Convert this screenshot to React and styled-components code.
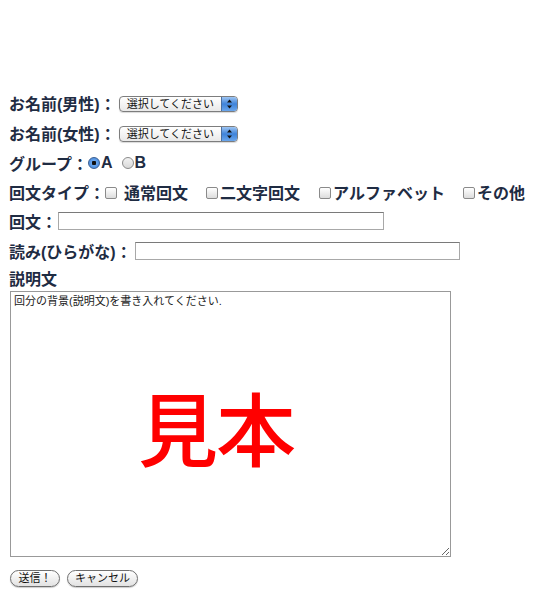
import React from 'react'
import styled, { createGlobalStyle } from 'styled-components'

const GlobalStyle = createGlobalStyle`
  html, body {
    margin: 0;
    padding: 0;
    background: #ffffff;
  }
  body {
    font-family: "Liberation Sans", "Noto Sans CJK JP", sans-serif;
  }
`

const Page = styled.form`
  padding: 88px 0 0 9px;
  width: 539px;
  height: 601px;
  box-sizing: border-box;
  color: #1f2c43;
`

const Row = styled.div`
  display: flex;
  align-items: center;
  height: ${p => p.h || 30}px;
  font-size: 16px;
  font-weight: bold;
  white-space: nowrap;
`

const Label = styled.span`
  margin-right: ${p => p.gap || 0}px;
`

const FakeSelect = styled.div`
  display: flex;
  align-items: center;
  width: 119px;
  height: 16px;
  box-sizing: border-box;
  border: 1px solid #7d7d7d;
  border-radius: 4px;
  background: linear-gradient(#ffffff, #e9e9e9);
  box-shadow: 0 1px 1px rgba(0, 0, 0, 0.15);
  overflow: hidden;
  font-size: 11px;
  font-weight: normal;
  color: #111;
  margin-top: 1px;
`

const SelectText = styled.span`
  flex: 1;
  padding-left: 7px;
  line-height: 14px;
`

const Stepper = styled.span`
  width: 15px;
  height: 100%;
  background: linear-gradient(#9fc6f3, #3f83d9 50%, #6aa6ec);
  border-left: 1px solid #4a6fa0;
  display: flex;
  align-items: center;
  justify-content: center;
`

const Radio = styled.span`
  display: inline-block;
  width: 12px;
  height: 12px;
  border-radius: 50%;
  box-sizing: border-box;
  margin: 1px 1px 0 ${p => p.ml || 0}px;
  border: 1px solid ${p => (p.checked ? '#3a5f92' : '#8a8a8a')};
  background: ${p => (p.checked
    ? 'radial-gradient(circle, #111 0 2px, #6aa6ec 2.5px, #3c7fd6 100%)'
    : 'linear-gradient(#f2f2f2, #d8d8d8)')};
`

const Check = styled.span`
  display: inline-block;
  width: 12px;
  height: 12px;
  box-sizing: border-box;
  border: 1px solid #8a8a8a;
  border-radius: 2px;
  background: linear-gradient(#ffffff, #dcdcdc);
  margin: 2px 2px 0 ${p => p.ml || 0}px;
`

const Choice = styled.span`
  margin-left: ${p => p.ml || 0}px;
`

const TextInput = styled.input`
  width: ${p => p.w}px;
  height: 18px;
  box-sizing: border-box;
  border: 1px solid #a8a8a8;
  border-top-color: #7a7a7a;
  padding: 0 3px;
  font-size: 12px;
  margin: 0;
  background: #fff;
`

const SectionLabel = styled.div`
  margin-top: 5px;
  height: 18px;
  line-height: 18px;
  font-size: 16px;
  font-weight: bold;
`

const AreaWrap = styled.div`
  position: relative;
  width: 441px;
  height: 266px;
  margin: 2px 0 0 1px;
`

const Area = styled.textarea`
  width: 441px;
  height: 266px;
  box-sizing: border-box;
  border: 1px solid #999;
  padding: 2px 3px;
  font-family: "Liberation Sans", "Noto Sans CJK JP", sans-serif;
  font-size: 11px;
  line-height: 14px;
  color: #222;
  margin: 0;
  display: block;
`

const Stamp = styled.div`
  position: absolute;
  left: 128px;
  top: 94px;
  font-family: "Noto Sans CJK JP", sans-serif;
  font-size: 80px;
  font-weight: 500;
  line-height: 1;
  color: #ff0000;
  letter-spacing: -2px;
  pointer-events: none;
`

const Buttons = styled.div`
  display: flex;
  gap: 7px;
  margin: 13px 0 0 1px;
`

const Button = styled.button`
  width: ${p => p.w}px;
  height: 17px;
  padding: 0;
  border: 1px solid #6f6f6f;
  border-radius: 9px;
  background: linear-gradient(#ffffff, #e2e2e2);
  box-shadow: 0 1px 1px rgba(0, 0, 0, 0.2);
  font-family: "Liberation Sans", "Noto Sans CJK JP", sans-serif;
  font-size: 11px;
  color: #111;
  line-height: 15px;
`

const Arrows = () => (
  <svg width="7" height="10" viewBox="0 0 7 10">
    <path d="M3.5 0.5 L6 3.5 L1 3.5 Z" fill="#111" />
    <path d="M3.5 9.5 L6 6.5 L1 6.5 Z" fill="#111" />
  </svg>
)

const Select = () => (
  <FakeSelect>
    <SelectText>選択してください</SelectText>
    <Stepper><Arrows /></Stepper>
  </FakeSelect>
)

export default function App() {
  return (
    <>
      <GlobalStyle />
      <Page onSubmit={e => e.preventDefault()}>
        <Row h={30}>
          <Label gap={3}>お名前(男性)：</Label>
          <Select />
        </Row>
        <Row h={30}>
          <Label gap={3}>お名前(女性)：</Label>
          <Select />
        </Row>
        <Row h={29}>
          <Label>グループ：</Label>
          <Radio checked />A
          <Radio ml={9} />B
        </Row>
        <Row h={29}>
          <Label>回文タイプ：</Label>
          <Check /><Choice ml={5}>通常回文</Choice>
          <Check ml={18} />二文字回文
          <Check ml={19} />アルファベット
          <Check ml={18} />その他
        </Row>
        <Row h={30}>
          <Label gap={1}>回文：</Label>
          <TextInput w={326} />
        </Row>
        <Row h={30}>
          <Label gap={3}>読み(ひらがな)：</Label>
          <TextInput w={325} />
        </Row>
        <SectionLabel>説明文</SectionLabel>
        <AreaWrap>
          <Area defaultValue="回分の背景(説明文)を書き入れてください." />
          <Stamp>見本</Stamp>
        </AreaWrap>
        <Buttons>
          <Button type="submit" w={50}>送信！</Button>
          <Button type="button" w={71}>キャンセル</Button>
        </Buttons>
      </Page>
    </>
  )
}
